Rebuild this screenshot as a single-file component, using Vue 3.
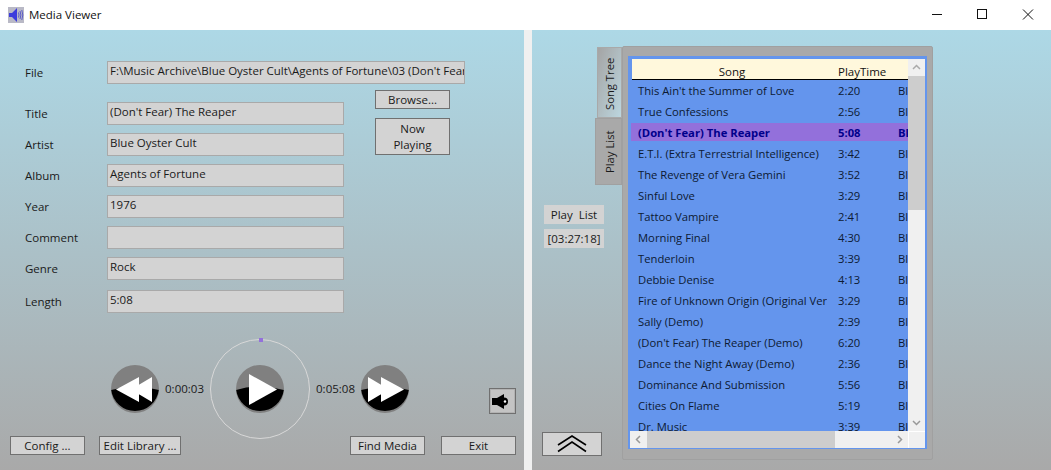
<script setup>
const fields = [
  { label: 'Title', value: "(Don't Fear) The Reaper" },
  { label: 'Artist', value: 'Blue Oyster Cult' },
  { label: 'Album', value: 'Agents of Fortune' },
  { label: 'Year', value: '1976' },
  { label: 'Comment', value: '' },
  { label: 'Genre', value: 'Rock' },
  { label: 'Length', value: '5:08' }
]
const songs = [
  ["This Ain't the Summer of Love", '2:20'],
  ['True Confessions', '2:56'],
  ["(Don't Fear) The Reaper", '5:08', true],
  ['E.T.I. (Extra Terrestrial Intelligence)', '3:42'],
  ['The Revenge of Vera Gemini', '3:52'],
  ['Sinful Love', '3:29'],
  ['Tattoo Vampire', '2:41'],
  ['Morning Final', '4:30'],
  ['Tenderloin', '3:39'],
  ['Debbie Denise', '4:13'],
  ['Fire of Unknown Origin (Original Version)', '3:29'],
  ['Sally (Demo)', '2:39'],
  ["(Don't Fear) The Reaper (Demo)", '6:20'],
  ['Dance the Night Away (Demo)', '2:36'],
  ['Dominance And Submission', '5:56'],
  ['Cities On Flame', '5:19'],
  ['Dr. Music', '3:39']
]
</script>

<template>
  <div class="window">
    <header class="titlebar">
      <svg class="app-icon" width="16" height="16" viewBox="0 0 16 16">
        <rect width="16" height="16" fill="#b9b9c6" />
        <path d="M1 6h3l5-5v14l-5-5H1z" fill="#3c3cdc" />
        <path d="M10.500 5.500q1 2.500 0 5M12 4q1.800 4 0 8M13.800 3q2 5 0 10" fill="none" stroke="#5a5ac8" stroke-width="1" />
      </svg>
      <span class="title">Media Viewer</span>
      <div class="controls">
        <svg width="46" height="30" viewBox="0 0 46 30"><path d="M19 14.500h10" stroke="#111" /></svg>
        <svg width="46" height="30" viewBox="0 0 46 30"><rect x="18.500" y="9.500" width="9" height="9" fill="none" stroke="#111" /></svg>
        <svg width="46" height="30" viewBox="0 0 46 30"><path d="M18 9.500l10 10M28 9.500l-10 10" stroke="#111" /></svg>
      </div>
    </header>
    <main class="body">
      <section class="left">
        <div class="file-row">
          <span class="label">File</span>
          <div class="field file">F:\Music Archive\Blue Oyster Cult\Agents of Fortune\03 (Don't Fear) The Reaper.mp3</div>
        </div>
        <div class="meta">
          <div class="fields">
            <div v-for="f in fields" :key="f.label" class="row">
              <span class="label">{{ f.label }}</span>
              <div class="field">{{ f.value }}</div>
            </div>
          </div>
          <div class="side">
            <button class="btn browse">Browse...</button>
            <button class="btn now">Now<br />Playing</button>
          </div>
        </div>
        <div class="transport">
          <svg class="knob" width="48" height="48" viewBox="0 0 48 48">
            <circle cx="24" cy="24" r="24" fill="#808080" />
            <path d="M.2 25Q24 18 47.800 25A24 24 0 0 1 .2 25z" fill="#000" />
            <path d="M5 24.500L28 12v25z M20 24.500L41 12v25z" fill="#fff" />
          </svg>
          <span class="time">0:00:03</span>
          <div class="ring">
            <i class="dot"></i>
            <svg class="knob" width="48" height="48" viewBox="0 0 48 48">
              <circle cx="24" cy="24" r="24" fill="#808080" />
              <path d="M.2 25Q24 18 47.800 25A24 24 0 0 1 .2 25z" fill="#000" />
              <path d="M13 9l28 15.500L13 40z" fill="#fff" />
            </svg>
          </div>
          <span class="time">0:05:08</span>
          <svg class="knob" width="48" height="48" viewBox="0 0 48 48">
            <circle cx="24" cy="24" r="24" fill="#808080" />
            <path d="M.2 25Q24 18 47.800 25A24 24 0 0 1 .2 25z" fill="#000" />
            <path d="M43 24.500L20 12v25z M28 24.500L7 12v25z" fill="#fff" />
          </svg>
          <button class="speaker">
            <svg width="25" height="24" viewBox="0 0 25 24">
              <path d="M2 9h5l7-4v15l-7-4H2z" fill="#000" />
              <circle cx="14" cy="12.500" r="4" fill="#000" />
              <circle cx="15" cy="12.500" r="1.200" fill="#fff" />
            </svg>
          </button>
        </div>
        <div class="actions">
          <button class="btn">Config ...</button>
          <button class="btn edit">Edit Library ...</button>
          <span class="spacer"></span>
          <button class="btn">Find Media</button>
          <button class="btn">Exit</button>
        </div>
      </section>
      <section class="right">
        <div class="summary">
          <div class="tag">Play&nbsp; List</div>
          <div class="tag">[03:27:18]</div>
          <button class="collapse">
            <svg width="30" height="18" viewBox="0 0 30 18">
              <path d="M1 10L15 1l14 9M1 16.500L15 7l14 9.500" fill="none" stroke="#000" stroke-width="1.600" />
            </svg>
          </button>
        </div>
        <div class="tabs">
          <div class="tab tree"><span>Song Tree</span></div>
          <div class="tab play"><span>Play List</span></div>
        </div>
        <div class="pane">
          <div class="list">
            <div class="grid-head">
              <span class="c-song head-song">Song</span>
              <span class="c-time">PlayTime</span>
            </div>
            <div class="rows">
              <div v-for="s in songs" :key="s[0]" class="song" :class="{ current: s[2] }">
                <span class="c-song">{{ s[0] }}</span>
                <span class="c-time">{{ s[1] }}</span>
                <span class="c-artist">Blue Oyster Cult</span>
              </div>
            </div>
            <div class="vscroll">
              <svg width="17" height="17" viewBox="0 0 17 17"><path d="M5 10l3.500-3.500L12 10" fill="none" stroke="#aaa" stroke-width="1.500" /></svg>
              <div class="vthumb"></div>
              <svg class="down" width="17" height="17" viewBox="0 0 17 17"><path d="M5 7l3.500 3.500L12 7" fill="none" stroke="#999" stroke-width="1.500" /></svg>
            </div>
            <div class="hscroll">
              <svg class="left-arrow" width="17" height="17" viewBox="0 0 17 17"><path d="M10 5L6.500 8.500 10 12" fill="none" stroke="#999" stroke-width="1.500" /></svg>
              <div class="hthumb"></div>
              <svg class="right-arrow" width="17" height="17" viewBox="0 0 17 17"><path d="M7 5l3.500 3.500L7 12" fill="none" stroke="#999" stroke-width="1.500" /></svg>
            </div>
            <div class="corner"></div>
          </div>
        </div>
      </section>
    </main>
  </div>
</template>

<style>
html, body { margin: 0; overflow: hidden; }
</style>

<style scoped>
.window {
  width: 1051px; height: 470px; display: flex; flex-direction: column;
  font: 11.5px/16px "Open Sans", "Noto Sans", sans-serif; color: #1a1a1a; background: #f0f0f0;
  overflow: hidden;
}
.titlebar { height: 30px; flex: none; background: #fff; display: flex; align-items: center; padding-left: 8px; }
.app-icon { flex: none; }
.title { margin-left: 5px; color: #111; }
.controls { margin-left: auto; display: flex; }
.body { flex: 1; display: flex; gap: 8px; min-height: 0; }
.left, .right { background: linear-gradient(#add8e6, #a9a9a9); min-width: 0; }
.left { width: 524px; flex: none; padding: 31px 8px 15px 10px; box-sizing: border-box; display: flex; flex-direction: column; }
.right { flex: 1; display: flex; padding: 16px 0 10px 10px; box-sizing: border-box; }

.file-row, .row { display: flex; align-items: center; }
.label { width: 97px; padding-left: 15px; box-sizing: border-box; flex: none; }
.field {
  width: 237px; height: 23px; box-sizing: border-box; background: #d3d3d3; border: 1px solid #a9a9a9;
  padding: 0 2px; line-height: 17px; white-space: nowrap; overflow: hidden; flex: none;
}
.file { width: 358px; }
.meta { display: flex; margin-top: 6px; }
.fields { display: flex; flex-direction: column; gap: 8px; margin-top: 12px; width: 365px; flex: none; }
.row:last-child { margin-top: 2px; }
.side { display: flex; flex-direction: column; gap: 9px; }
.btn {
  font: inherit; color: #1a1a1a; background: #d3d3d3; border: 1px solid #707070; width: 75px; height: 19px;
  padding: 0; box-sizing: border-box; line-height: 16px; flex: none;
}
.now { height: 37px; }

.transport { display: flex; align-items: center; margin-top: 25px; height: 102px; padding-left: 101px; }
.knob { flex: none; display: block; }
.time { width: 51px; text-align: center; flex: none; }
.ring {
  position: relative; width: 100px; height: 100px; box-sizing: border-box; border: 1px solid #d8d8d8; border-radius: 50%;
  display: flex; align-items: center; justify-content: center; flex: none;
}
.dot { position: absolute; top: -2px; left: 48px; width: 4px; height: 4px; background: #9370db; }
.speaker {
  width: 27px; height: 26px; margin-left: 80px; margin-top: 24px; padding: 0; background: #c4c4c4; border: 1px solid #707070;
  box-shadow: inset 0 0 0 1px #b2b2b2;
  display: flex; align-items: center; justify-content: center; flex: none;
}
.actions { display: flex; margin-top: -4px; gap: 14px; }
.edit { width: 82px; }
.spacer { flex: 1; }
.actions .btn:last-child { margin-left: 2px; }

.summary { width: 62px; flex: none; display: flex; flex-direction: column; align-items: flex-start; padding-top: 159px; }
.tag { background: #d3d3d3; width: 60px; height: 19px; line-height: 19px; text-align: center; margin-left: 2px; margin-bottom: 5px; }
.collapse {
  margin-top: auto; margin-bottom: 4px; width: 60px; height: 24px; padding: 0; background: #d3d3d3; border: 1px solid #707070;
  display: flex; align-items: center; justify-content: center;
}
.tabs { width: 28px; flex: none; display: flex; flex-direction: column; align-items: flex-end; padding-top: 1px; margin-left: -10px; }
.tab { writing-mode: vertical-rl; transform: rotate(180deg); display: flex; align-items: center; justify-content: center; box-sizing: border-box; font-size: 11.25px; }
.tree { width: 25px; height: 71px; padding-bottom: 3px; background: linear-gradient(to top left, #a4a4a4, #bcd6df); border: 1px solid #a9a9a9; }
.play { width: 27px; height: 67px; padding-right: 3px; background: #a9a9a9; border: 1px solid #a0a0a0; }
.pane {
  width: 311px; height: 414px; box-sizing: border-box; background: #a9a9a9; border: 1px solid #a0a0a0; border-radius: 2px; padding: 9px 5px 10px 5px;
}
.list {
  position: relative; width: 299px; height: 393px; box-sizing: border-box; border: 2px solid #6495ed; border-top-width: 3px; border-bottom-width: 1px; background: #6495ed; overflow: hidden;
}
.grid-head { height: 21px; margin-left: 2px; background: #fff8dc; border-bottom: 1px solid #000; display: flex; line-height: 25px; color: #111; box-sizing: border-box; padding-right: 17px; }
.rows { position: absolute; left: 1px; top: 21px; right: 17px; bottom: 17px; background: #6495ed; overflow: hidden; font-size: 11.25px; }
.song { height: 21px; display: flex; line-height: 21px; white-space: nowrap; color: #0d1a33; box-sizing: border-box; }
.song .c-time, .song .c-song, .song .c-artist { height: 21px; }
.current { padding: 1px 0 2px; background: #9370db content-box; color: #00008b; font-weight: 700; line-height: 19px; }
.current .c-song, .current .c-time, .current .c-artist { height: 18px; overflow: visible; }
.c-song { width: 200px; padding-left: 7px; box-sizing: border-box; overflow: hidden; flex: none; }
.song .c-song { width: 196px; margin-right: 4px; }
.head-song { text-align: center; padding-left: 0; }
.c-time { width: 67px; padding-left: 7px; box-sizing: border-box; flex: none; }
.grid-head .c-time { padding-left: 6px; }
.c-artist { flex: none; }
.vscroll { position: absolute; right: 0; top: 0; bottom: 17px; width: 17px; background: #f0f0f0; display: flex; flex-direction: column; }
.vthumb { width: 17px; height: 134px; background: #cdcdcd; flex: none; }
.down { margin-top: auto; }
.hscroll { position: absolute; left: 0; right: 17px; bottom: 0; height: 17px; background: #f0f0f0; display: flex; }
.hthumb { width: 188px; background: #cdcdcd; }
.left-arrow { flex: none; }
.right-arrow { margin-left: auto; }
.corner { position: absolute; right: 0; bottom: 0; width: 17px; height: 17px; box-sizing: border-box; background: #f0f0f0; border-left: 1px solid #fff; border-top: 1px solid #fff; }
</style>
